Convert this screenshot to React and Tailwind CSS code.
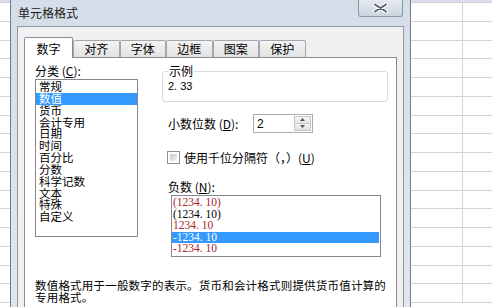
import React from 'react';

const categories = ['常规', '数值', '货币', '会计专用', '日期', '时间', '百分比', '分数', '科学记数', '文本', '特殊', '自定义'];

const negatives = [
  { text: '(1234. 10)', color: 'text-[#a8262a]' },
  { text: '(1234. 10)', color: 'text-black' },
  { text: '1234. 10', color: 'text-[#a8262a]' },
  { text: '-1234. 10', color: 'text-white', selected: true },
  { text: '-1234. 10', color: 'text-[#a8262a]' },
];

const tabs = ['对齐', '字体', '边框', '图案', '保护'];

const rows = Array.from({ length: 16 });

// spreadsheet cells peeking out beside the dialog
const Sheet = ({ wide }) => (
  <div className={wide ? 'flex-1 flex flex-col bg-white' : 'w-[10px] flex flex-col bg-white'}>
    <div className="h-[3px] shrink-0 bg-[#d9dbee] border-b border-[#d2d2d2]" />
    {rows.map((_, i) => (
      <div key={i} className="h-[18.75px] shrink-0 flex border-b border-[#d4d4d4]">
        {wide && <div className="w-[52px] border-r border-[#d4d4d4]" />}
      </div>
    ))}
  </div>
);

const Arrow = ({ up }) => (
  <svg width="5" height="3" viewBox="0 0 5 3">
    <path d={up ? 'M0 3 L2.5 0 L5 3 Z' : 'M0 0 L2.5 3 L5 0 Z'} fill="#4d5560" />
  </svg>
);

export default function App() {
  return (
    <div className="w-[492px] h-[307px] overflow-hidden flex bg-white text-[12px] text-black font-['Noto_Sans_CJK_SC','Noto_Sans',sans-serif]">
      <Sheet />

      {/* dialog window */}
      <div className="w-[401px] h-full shrink-0 flex flex-col border-x border-[#6f7d8c] bg-linear-to-b from-[#d5dee8] to-[#dfe6ee]">
        {/* title bar */}
        <div className="h-[26px] shrink-0 flex items-start justify-between pl-[7px] pr-[7px]">
          <span className="mt-[7px] leading-[12px] text-[12px] text-[#1b1b1b]">单元格格式</span>
          <div className="w-[45px] h-[17px] flex items-center justify-center rounded-b-[3px] border border-t-0 border-[#8b97a4] bg-linear-to-b from-[#e3e9ef] to-[#ccd5df]">
            <svg width="15" height="10" viewBox="0 0 15 10">
              <path d="M2 1.5 L13 8.5 M13 1.5 L2 8.5" stroke="#ffffff" strokeWidth="4" strokeLinecap="round" />
              <path d="M2 1.5 L13 8.5 M13 1.5 L2 8.5" stroke="#56616d" strokeWidth="2" strokeLinecap="round" />
            </svg>
          </div>
        </div>

        {/* client area */}
        <div className="flex-1 mx-[6px] border border-[#8d99a6] bg-[#f0f0f0] pt-[10px]">
          {/* tabs */}
          <div className="flex items-end h-[20px] pl-[6px]">
            <div className="relative z-10 w-[49px] h-[21px] -mb-px flex items-center justify-center pt-[1px] border border-b-0 border-[#898c95] rounded-t-[2px] bg-white leading-[12px]">
              数字
            </div>
            {tabs.map((t) => (
              <div
                key={t}
                className="w-[46.5px] h-[17px] flex items-center justify-center border border-b-0 border-[#a3a7ae] rounded-t-[2px] bg-linear-to-b from-[#f4f4f4] to-[#e2e2e2] leading-[12px]"
              >
                {t}
              </div>
            ))}
          </div>

          {/* tab panel */}
          <div className="mx-[6px] h-[260px] border border-[#898c95] bg-white pt-[7px] pl-[10px]">
            <div className="flex items-start">
              {/* category column */}
              <div className="w-[103px] flex flex-col">
                <div className="h-[12px] leading-[12px]">
                  分类 (<u>C</u>):
                </div>
                <div className="mt-[2px] h-[158px] border border-[#828790] pt-[1px] text-[11.5px]">
                  {categories.map((c, i) => (
                    <div
                      key={c}
                      className={
                        i === 1
                          ? 'h-[11.85px] leading-[11.85px] px-[3px] whitespace-nowrap bg-[#3399ff] text-white'
                          : 'h-[11.85px] leading-[11.85px] px-[3px] whitespace-nowrap'
                      }
                    >
                      {c}
                    </div>
                  ))}
                </div>
              </div>

              {/* options column */}
              <div className="ml-[24px] flex flex-col">
                <fieldset className="w-[226px] border border-[#d5dde4] rounded-[3px] px-[5px] pb-[8px]">
                  <legend className="px-[1px] leading-[12px]">示例</legend>
                  <div className="mt-[3px] h-[13px] leading-[13px] text-[11px] font-['Liberation_Sans',sans-serif]">2. 33</div>
                </fieldset>

                <div className="mt-[12px] h-[19px] flex items-center">
                  <span className="ml-[6px] w-[85px] leading-[12px] whitespace-nowrap">
                    小数位数 (<u>D</u>):
                  </span>
                  <div className="w-[60px] h-[19px] flex items-center justify-between border border-[#abadb3] bg-white pl-[3px] pr-[1px]">
                    <span className="leading-[12px] font-['Liberation_Sans',sans-serif]">2</span>
                    <div className="w-[17px] h-[15px] flex flex-col">
                      <div className="h-[7.5px] flex items-center justify-center border border-[#c4c6ca] bg-linear-to-b from-[#f6f6f6] to-[#e4e4e4]">
                        <Arrow up />
                      </div>
                      <div className="h-[7.5px] flex items-center justify-center border border-t-0 border-[#c4c6ca] bg-linear-to-b from-[#f3f3f3] to-[#e0e0e0]">
                        <Arrow />
                      </div>
                    </div>
                  </div>
                </div>

                <div className="mt-[17px] h-[15px] ml-[5px] flex items-center gap-[4px]">
                  <div className="w-[13px] h-[13px] border border-[#8f8f8f] bg-white p-[2px]">
                    <div className="w-full h-full bg-linear-to-br from-[#c9c9c9] to-[#f3f3f3]" />
                  </div>
                  <span className="leading-[12px] whitespace-nowrap">
                    使用千位分隔符（，）(<u>U</u>)
                  </span>
                </div>

                <div className="mt-[16px] ml-[6px] h-[12px] leading-[12px]">
                  负数 (<u>N</u>):
                </div>
                <div className="mt-[2px] ml-[9px] w-[210px] h-[62px] border border-[#828790] pt-[1px] text-[11.5px] font-['Liberation_Serif',serif]">
                  {negatives.map((n, i) => (
                    <div
                      key={i}
                      className={
                        n.selected
                          ? 'h-[11.6px] leading-[11.6px] pl-[1px] mr-[1px] bg-[#3399ff] ' + n.color
                          : 'h-[11.6px] leading-[11.6px] pl-[1px] ' + n.color
                      }
                    >
                      {n.text}
                    </div>
                  ))}
                </div>
              </div>
            </div>

            <p className="mt-[22px] text-[11.5px] leading-[12px] whitespace-nowrap tracking-[0.2px]">
              数值格式用于一般数字的表示。货币和会计格式则提供货币值计算的
              <br />
              专用格式。
            </p>
          </div>
        </div>
      </div>

      <Sheet wide />
    </div>
  );
}
